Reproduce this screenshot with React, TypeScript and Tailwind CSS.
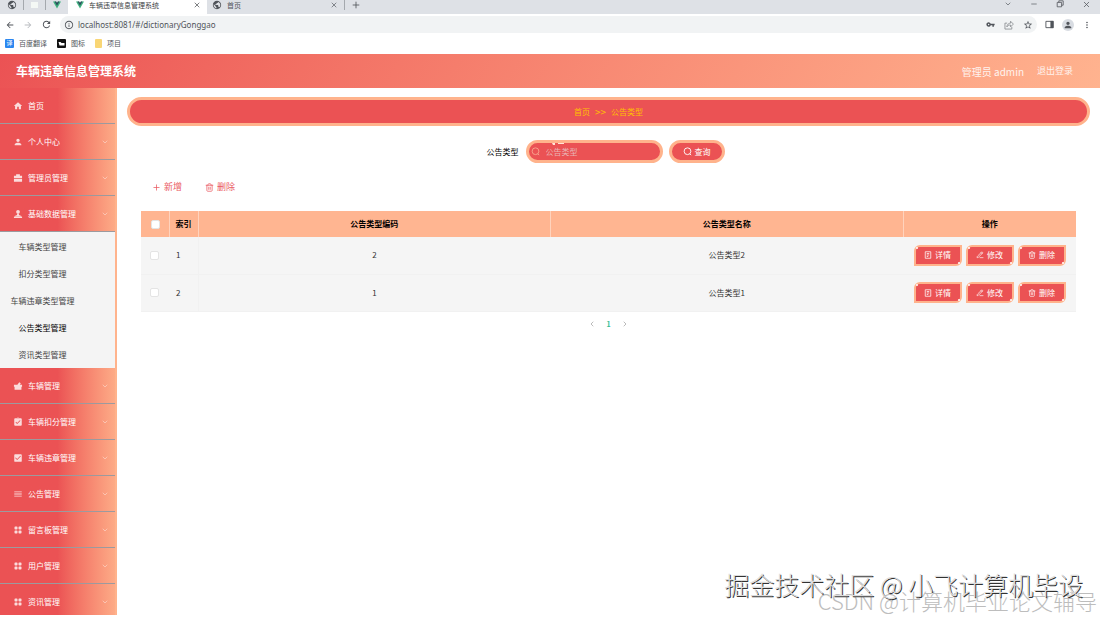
import type { IconType } from "react-icons";
import { BsGridFill } from "react-icons/bs";
import {
  LuChevronDown,
  LuChevronLeft,
  LuChevronRight,
  LuMinus,
  LuPencilLine,
  LuPlus,
  LuTrash2,
  LuX,
} from "react-icons/lu";
import {
  MdArrowBack,
  MdArrowForward,
  MdAssignmentTurnedIn,
  MdCheckBox,
  MdHome,
  MdInfoOutline,
  MdMenu,
  MdMoreVert,
  MdPerson,
  MdPublic,
  MdRefresh,
  MdStarBorder,
  MdVpnKey,
} from "react-icons/md";

interface IconProps {
  className?: string;
}

interface MenuItem {
  label: string;
  icon: IconType | ((props: IconProps) => React.ReactNode);
  children?: string[];
  leaf?: boolean;
}

function VueLogo() {
  return (
    <svg viewBox="0 0 24 21" className="h-2 w-2 shrink-0">
      <path d="M0 0h9.3L12 4.6 14.7 0H24L12 21z" fill="#3fb27f" />
      <path d="M4.8 0h4.5L12 4.6 14.7 0h4.5L12 12.5z" fill="#2f4a5c" />
    </svg>
  );
}

function DetailIcon({ className }: IconProps) {
  return (
    <svg viewBox="0 0 16 16" fill="none" stroke="currentColor" strokeWidth="1.5" className={className}>
      <path d="M2.5 1.5h11v13h-11zM5.5 5h5M5.5 8h5M5.5 11h3" />
    </svg>
  );
}

function SearchIcon({ className }: IconProps) {
  return (
    <svg viewBox="0 0 16 16" fill="none" stroke="currentColor" strokeWidth="1.6" className={className}>
      <circle cx="8" cy="7.5" r="6" />
      <path d="M12 12l2.500 2.500" />
    </svg>
  );
}

function CaseIcon({ className }: IconProps) {
  return (
    <svg viewBox="0 0 16 16" fill="currentColor" className={className}>
      <path d="M5 2h6v2.500h3.500V8h-13V4.500H5zM1.500 9h13v5h-13z" />
    </svg>
  );
}

function PlatformIcon({ className }: IconProps) {
  return (
    <svg viewBox="0 0 16 16" fill="currentColor" className={className}>
      <circle cx="8" cy="4.500" r="3" />
      <path d="M6.500 7h3v2.500l4 1.500v1h-11v-1l4-1.500zM1.500 12.500h13v2h-13z" />
    </svg>
  );
}

function GoodsIcon({ className }: IconProps) {
  return (
    <svg viewBox="0 0 16 16" fill="currentColor" className={className}>
      <path d="M1.500 6H7l3-4 2.500 1.500L11 6h3.500v3h-1v5h-11V9h-1z" />
    </svg>
  );
}

const menu: MenuItem[] = [
  { label: "首页", icon: MdHome, leaf: true },
  { label: "个人中心", icon: MdPerson },
  { label: "管理员管理", icon: CaseIcon },
  {
    label: "基础数据管理",
    icon: PlatformIcon,
    children: ["车辆类型管理", "扣分类型管理", "车辆违章类型管理", "公告类型管理", "资讯类型管理"],
  },
  { label: "车辆管理", icon: GoodsIcon },
  { label: "车辆扣分管理", icon: MdAssignmentTurnedIn },
  { label: "车辆违章管理", icon: MdCheckBox },
  { label: "公告管理", icon: MdMenu },
  { label: "留言板管理", icon: BsGridFill },
  { label: "用户管理", icon: BsGridFill },
  { label: "资讯管理", icon: BsGridFill },
];

const rows = [
  { index: 1, code: "2", name: "公告类型2" },
  { index: 2, code: "1", name: "公告类型1" },
];

function BrowserBar() {
  return (
    <div className="text-[7px] leading-[10px] text-[#50545a]">
      <div className="flex h-[14px] bg-[#dee1e6]">
        <div className="flex h-[10px] w-[68px] items-center">
          <div className="flex w-6 justify-center border-r border-[#a5a9ae]">
            <MdPublic size={10} />
          </div>
          <div className="flex h-[10px] w-[22px] items-center justify-center border-r border-[#a5a9ae]">
            <span className="h-[6px] w-[7px] bg-[#f4f8f5]" />
          </div>
          <div className="flex flex-1 justify-center">
            <VueLogo />
          </div>
        </div>
        <div className="flex w-[139px] bg-white pr-[6px] pl-2">
          <div className="flex h-[10px] flex-1 items-center gap-[5px] text-[#3c4043]">
            <VueLogo />
            <span>车辆违章信息管理系统</span>
            <button aria-label="关闭标签页" className="ml-auto">
              <LuX size={8} />
            </button>
          </div>
        </div>
        <div className="flex h-[10px] w-[138px] items-center gap-[5px] border-r border-[#a5a9ae] pr-[6px] pl-[5px]">
          <MdPublic size={10} />
          <span>首页</span>
          <button aria-label="关闭标签页" className="ml-auto">
            <LuX size={8} />
          </button>
        </div>
        <button aria-label="新建标签页" className="ml-[6px] h-[10px]">
          <LuPlus size={10} />
        </button>
        <div className="ml-auto flex h-2 items-center gap-[18px] pr-[9px]">
          <LuChevronDown size={8} />
          <LuMinus size={8} />
          <svg viewBox="0 0 10 10" fill="none" stroke="currentColor" className="h-2 w-2">
            <path d="M1.5 3h5.500v5.500h-5.500zM3.500 3V1h5.500v5.500H7" />
          </svg>
          <LuX size={9} />
        </div>
      </div>

      <div className="flex h-[21px] items-center gap-2 bg-white pr-2 pl-[5px]">
        <MdArrowBack size={10} />
        <MdArrowForward size={10} className="text-[#b9bcc0]" />
        <MdRefresh size={11} />
        <div className="flex h-[17px] flex-1 items-center gap-1 rounded-full bg-[#f1f3f4] pr-1 pl-1">
          <MdInfoOutline size={10} className="shrink-0" />
          <input
            aria-label="地址"
            defaultValue="localhost:8081/#/dictionaryGonggao"
            className="min-w-0 flex-1 bg-transparent font-['Noto_Sans','Noto_Sans_CJK_SC',sans-serif] text-[8px] outline-none"
          />
          <div className="flex items-center gap-[9px]">
            <MdVpnKey size={9} />
            <svg viewBox="0 0 16 16" fill="none" stroke="currentColor" strokeWidth="1.2" className="h-[10px] w-[10px] opacity-70">
              <path d="M5 5H1.500v9.500h11V11M4.500 11c.5-4 3-6 6-6V2l4.500 4.500-4.500 4.500V8c-3 0-4.500 1-6 3z" />
            </svg>
            <MdStarBorder size={10} />
          </div>
        </div>
        <div className="flex items-center gap-2">
          <svg viewBox="0 0 10 10" className="h-[9px] w-[9px]">
            <path d="M1 1.500h8v7H1z" fill="none" stroke="currentColor" />
            <path d="M6 1h3.500v8H6z" fill="currentColor" />
          </svg>
          <span className="flex h-3 w-3 items-center justify-center rounded-full bg-[#d8dce2]">
            <MdPerson size={10} />
          </span>
          <MdMoreVert size={10} />
        </div>
      </div>

      <nav className="flex h-[19px] items-center gap-[10px] bg-white pb-[3px] pl-[5px]">
        <a href="#fanyi" className="flex items-center gap-[5px]">
          <span className="flex h-[9px] w-[9px] items-center justify-center rounded-[1px] bg-[#2b87f0] text-[6px] text-white">译</span>
          百度翻译
        </a>
        <a href="#tubiao" className="flex items-center gap-[5px]">
          <svg viewBox="0 0 9 9" className="h-[9px] w-[9px]">
            <rect width="9" height="9" rx="1" fill="#111" />
            <path d="M1.500 3h2l1 1h3v2.500h-5z" fill="#fff" />
          </svg>
          图标
        </a>
        <a href="#xiangmu" className="flex items-center gap-[5px]">
          <span className="h-[9px] w-[7px] rounded-[1px] bg-[#f9d675]" />
          项目
        </a>
      </nav>
    </div>
  );
}

function Sidebar() {
  return (
    <aside className="w-[117px] shrink-0 overflow-hidden border-r-2 border-[#ffb38c] text-[8px] leading-[12px]">
      {menu.map(({ label, icon: Icon, children, leaf }) => (
        <div key={label}>
          <button className="flex h-9 w-full items-center gap-[5px] border-b border-[#9c9a9e] bg-linear-to-r from-[#eb5254] from-50% to-[#fdab87] pr-[6px] pl-[13px] text-white">
            <Icon className={Icon === BsGridFill ? "h-[10px] w-[10px] p-px opacity-80" : "h-[10px] w-[10px] opacity-80"} />
            <span>{label}</span>
            {!leaf && <LuChevronDown size={8} className="ml-auto opacity-60" />}
          </button>
          {children && (
            <ul className="bg-[#f4f4f4] pt-px text-[#444]">
              {children.map((child) => (
                <li key={child}>
                  <a
                    href={`#${child}`}
                    className={
                      child === "公告类型管理"
                        ? "flex h-[27px] w-[85px] items-center justify-center text-black"
                        : "flex h-[27px] w-[85px] items-center justify-center"
                    }
                  >
                    {child}
                  </a>
                </li>
              ))}
            </ul>
          )}
        </div>
      ))}
    </aside>
  );
}

function RowButton({ icon: Icon, label }: { icon: MenuItem["icon"]; label: string }) {
  return (
    <button className="relative flex h-[21px] w-12 items-center justify-center gap-[3px] rounded-tl-[6px] rounded-br-[6px] border-2 border-[#ffb38c] bg-[#eb5254] text-white">
      <Icon className="h-2 w-2" />
      {label}
      <span className="absolute top-0 left-0 h-[2px] w-[2px] rounded-full bg-white" />
      <span className="absolute right-0 bottom-0 h-[2px] w-[2px] rounded-full bg-white" />
    </button>
  );
}

function Checkbox({ label }: { label: string }) {
  return (
    <input
      type="checkbox"
      aria-label={label}
      className="block h-[9px] w-[9px] appearance-none rounded-[2px] border border-[#e4e4e4] bg-white"
    />
  );
}

export default function App() {
  return (
    <div className="relative flex h-screen flex-col overflow-hidden bg-white pb-[2px] font-['Noto_Sans_CJK_SC',sans-serif]">
      <BrowserBar />
      <header className="flex h-[34px] shrink-0 items-center justify-between bg-linear-120 from-[#eb5254] to-[#ffb38f] pr-[27px] pl-4 text-white">
        <h1 className="text-[12px] font-bold">车辆违章信息管理系统</h1>
        <div className="flex items-center gap-[13px] text-[#fff3ee]">
          <span className="text-[10px]">管理员 admin</span>
          <button className="text-[9px]">退出登录</button>
        </div>
      </header>

      <div className="flex min-h-0 flex-1">
        <Sidebar />
        <main className="min-w-0 flex-1 px-[10px] pt-[9px] text-[8px] leading-[12px] text-[#333]">
          <nav className="flex h-[29px] items-center justify-center gap-[5px] rounded-full border-3 border-[#ffb38c] bg-[#eb5254] text-[#ffc000]">
            <a href="#home">首页</a>
            <span className="text-[10px]">&gt;&gt;</span>
            <span>公告类型</span>
          </nav>

          <form className="mt-[14px] flex items-center justify-center pr-[6px]">
            <label htmlFor="type-name" className="mr-[7px] text-black">
              公告类型
            </label>
            <div className="relative flex h-[23px] w-[137px] items-center gap-[6px] rounded-full border-3 border-[#ffb38c] bg-[#eb5254] px-[2px]">
              <SearchIcon className="h-[9px] w-[9px] shrink-0 text-[#f8a58f]" />
              <input
                id="type-name"
                placeholder="公告类型"
                className="min-w-0 flex-1 bg-transparent outline-none placeholder:text-[#e9b5b5]"
              />
              <svg viewBox="0 0 14 2" fill="#ffe3d6" className="absolute top-0 left-[22px] h-[2px] w-[14px]">
                <path d="M1 0h3v2H2zM7 0h6v1H7z" />
              </svg>
            </div>
            <button
              type="button"
              className="ml-[6px] flex h-[23px] w-14 items-center justify-center gap-[3px] rounded-full border-3 border-[#ffb38c] bg-[#eb5254] text-white"
            >
              <SearchIcon className="h-[9px] w-[9px]" />
              查询
            </button>
          </form>

          <div className="mt-[18px] flex gap-[23px] pl-[25px] text-[9px] text-[#ea5a62]">
            <button className="flex items-center gap-[3px]">
              <LuPlus size={9} />
              新增
            </button>
            <button className="flex items-center gap-[3px]">
              <LuTrash2 size={9} />
              删除
            </button>
          </div>

          <div className="mt-[18px] px-[14px]">
            <table className="w-full table-fixed text-center">
              <thead>
                <tr className="h-[26px] bg-[#ffb591] text-black">
                  <th className="w-7 border-r border-[#ffd3bd] pl-[10px]">
                    <Checkbox label="全选" />
                  </th>
                  <th className="w-[29px] border-r border-[#ffd3bd] pl-[6px] text-left">索引</th>
                  <th className="border-r border-[#ffd3bd]">公告类型编码</th>
                  <th className="border-r border-[#ffd3bd]">公告类型名称</th>
                  <th className="w-[173px]">操作</th>
                </tr>
              </thead>
              <tbody>
                {rows.map((row) => (
                  <tr key={row.index} className="h-[37px] border-b border-[#f1f1f1] bg-[#f5f5f5]">
                    <td className="pl-[9px]">
                      <Checkbox label={`选择 ${row.index}`} />
                    </td>
                    <td className="border-r border-[#f1f1f1] pl-[7px] text-left">{row.index}</td>
                    <td>{row.code}</td>
                    <td>{row.name}</td>
                    <td>
                      <div className="flex justify-center gap-1">
                        <RowButton icon={DetailIcon} label="详情" />
                        <RowButton icon={LuPencilLine} label="修改" />
                        <RowButton icon={LuTrash2} label="删除" />
                      </div>
                    </td>
                  </tr>
                ))}
              </tbody>
            </table>
          </div>

          <div className="mt-[6px] flex items-center justify-center gap-[10px] text-[7px] text-[#999]">
            <button aria-label="上一页">
              <LuChevronLeft size={8} />
            </button>
            <button className="font-bold text-[#35bd92]">1</button>
            <button aria-label="下一页">
              <LuChevronRight size={8} />
            </button>
          </div>
        </main>
      </div>

      <p className="absolute right-[3px] bottom-[3px] text-[22px] leading-[28px] font-light text-[#bdbdbd]">CSDN @计算机毕业论文辅导</p>
      <p className="absolute right-[17px] bottom-[17px] text-[25px] leading-[32px] font-light text-[#dcdcdc] [text-shadow:1px_1px_0_#333]">
        掘金技术社区 @ 小飞计算机毕设
      </p>
    </div>
  );
}
